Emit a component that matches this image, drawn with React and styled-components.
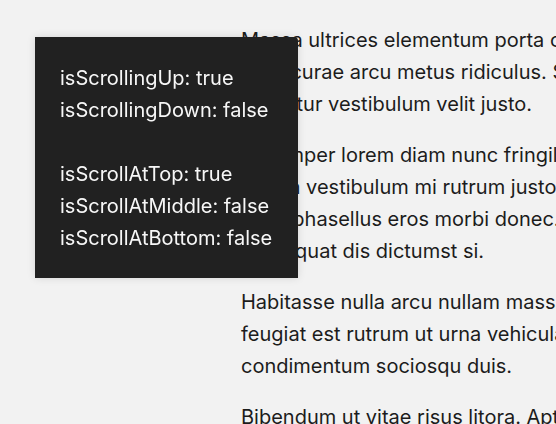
import React from 'react'
import styled, { createGlobalStyle } from 'styled-components'

const GlobalStyle = createGlobalStyle`
  html, body {
    margin: 0;
    padding: 0;
    background: #f2f2f2;
    overflow: hidden;
  }
  body {
    font-family: Inter, "Noto Sans", sans-serif;
  }
`

const Page = styled.main`
  height: 100vh;
  box-sizing: border-box;
  overflow: hidden;
  padding: 24px 0 0 241px;
`

const Para = styled.p`
  margin: 0 0 19px;
  font-size: 20px;
  line-height: 32px;
  color: #1c1c1c;
  white-space: nowrap;
`

const Status = styled.div`
  position: fixed;
  top: 37px;
  left: 35px;
  padding: 25px 26px 24px 25px;
  background: #212121;
  color: #f7f7f7;
  border-radius: 0 4px 0 0;
  box-shadow: 0 0 8px rgba(0, 0, 0, 0.12);
  font-size: 20px;
  line-height: 32px;
`

const Line = styled.div`
  white-space: nowrap;
  min-height: 32px;
`

const paragraphs = [
  [
    'Massa ultrices elementum porta cras',
    'Nam curae arcu metus ridiculus. Sed',
    'Conditur vestibulum velit justo.',
  ],
  [
    'Id semper lorem diam nunc fringilla',
    'Causa vestibulum mi rutrum justo',
    'Ictus phasellus eros morbi donec. Nunc',
    'Persequat dis dictumst si.',
  ],
  [
    'Habitasse nulla arcu nullam massa ante',
    'feugiat est rutrum ut urna vehicula',
    'condimentum sociosqu duis.',
  ],
  ['Bibendum ut vitae risus litora. Aptent taciti'],
]

const status = [
  'isScrollingUp: true',
  'isScrollingDown: false',
  '',
  'isScrollAtTop: true',
  'isScrollAtMiddle: false',
  'isScrollAtBottom: false',
]

export default function App() {
  return (
    <>
      <GlobalStyle />
      <Page>
        {paragraphs.map((lines, i) => (
          <Para key={i}>
            {lines.map((l, j) => (
              <React.Fragment key={j}>
                {j > 0 && <br />}
                {l}
              </React.Fragment>
            ))}
          </Para>
        ))}
      </Page>
      <Status>
        {status.map((s, i) => (
          <Line key={i}>{s}</Line>
        ))}
      </Status>
    </>
  )
}
